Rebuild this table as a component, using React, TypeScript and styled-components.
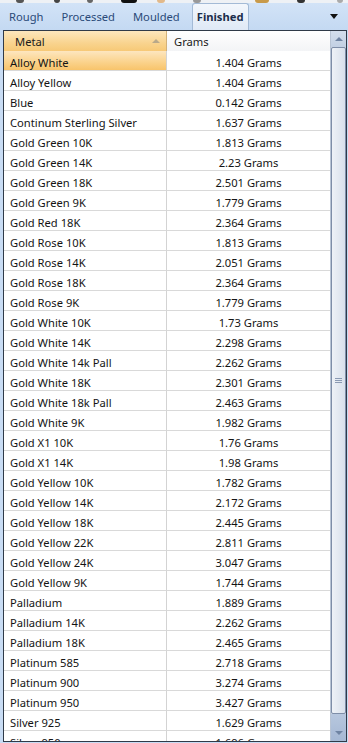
import React from "react";
import styled, { createGlobalStyle } from "styled-components";

const GlobalStyle = createGlobalStyle`
  html, body { margin: 0; padding: 0; background: #c8dcf4; overflow: hidden; }
  body { font-family: "Segoe UI", "Noto Sans", "Open Sans", sans-serif; }
`;

const rows: [string, string][] = [
  ["Alloy White", "1.404"],
  ["Alloy Yellow", "1.404"],
  ["Blue", "0.142"],
  ["Continum Sterling Silver", "1.637"],
  ["Gold Green 10K", "1.813"],
  ["Gold Green 14K", "2.23"],
  ["Gold Green 18K", "2.501"],
  ["Gold Green 9K", "1.779"],
  ["Gold Red 18K", "2.364"],
  ["Gold Rose 10K", "1.813"],
  ["Gold Rose 14K", "2.051"],
  ["Gold Rose 18K", "2.364"],
  ["Gold Rose 9K", "1.779"],
  ["Gold White 10K", "1.73"],
  ["Gold White 14K", "2.298"],
  ["Gold White 14k Pall", "2.262"],
  ["Gold White 18K", "2.301"],
  ["Gold White 18k Pall", "2.463"],
  ["Gold White 9K", "1.982"],
  ["Gold X1 10K", "1.76"],
  ["Gold X1 14K", "1.98"],
  ["Gold Yellow 10K", "1.782"],
  ["Gold Yellow 14K", "2.172"],
  ["Gold Yellow 18K", "2.445"],
  ["Gold Yellow 22K", "2.811"],
  ["Gold Yellow 24K", "3.047"],
  ["Gold Yellow 9K", "1.744"],
  ["Palladium", "1.889"],
  ["Palladium 14K", "2.262"],
  ["Palladium 18K", "2.465"],
  ["Platinum 585", "2.718"],
  ["Platinum 900", "3.274"],
  ["Platinum 950", "3.427"],
  ["Silver 925", "1.629"],
  ["Silver 950", "1.696"],
];

const Frame = styled.div`
  width: 348px;
  height: 743px;
  display: flex;
  flex-direction: column;
  background: #c8dcf4;
  overflow: hidden;
`;

const TopStrip = styled.div`
  height: 3px;
  flex: none;
  display: flex;
  align-items: flex-start;
  background: #eef1f5;
`;

const Blob = styled.span<{ $ml: number; $w: number; $c: string }>`
  display: block;
  margin-left: ${(p) => p.$ml}px;
  width: ${(p) => p.$w}px;
  height: 3px;
  border-radius: 0 0 3px 3px;
  background: ${(p) => p.$c};
`;

const TabBar = styled.div`
  height: 27px;
  flex: none;
  display: flex;
  align-items: stretch;
  background: linear-gradient(#d2e3f7, #c4d9f2);
`;

const Tab = styled.div<{ $active?: boolean }>`
  display: flex;
  align-items: center;
  padding-bottom: 1px;
  font-size: 11.2px;
  color: ${(p) => (p.$active ? "#1b2d4a" : "#2a4a78")};
  font-weight: ${(p) => (p.$active ? 700 : 400)};
  padding-left: ${(p) => (p.$active ? "4px" : "8px")};
  padding-right: ${(p) => (p.$active ? "4px" : "8px")};
  margin-left: ${(p) => (p.$active ? "3px" : "0")};
  background: ${(p) => (p.$active ? "linear-gradient(#f3f7fc, #dfe9f6)" : "transparent")};
  border: ${(p) => (p.$active ? "1px solid #a3bad6" : "1px solid transparent")};
  border-bottom: none;
  border-radius: 3px 3px 0 0;
`;

const Spacer = styled.div`
  flex: 1;
`;

const DropArrow = styled.div`
  align-self: center;
  width: 0;
  height: 0;
  margin-right: 10px;
  border-left: 4px solid transparent;
  border-right: 4px solid transparent;
  border-top: 5px solid #111;
`;

const GridBox = styled.div`
  flex: 1;
  min-height: 0;
  display: flex;
  margin: 0 1px 1px 3px;
  border: 1px solid #2f3a48;
  background: #fff;
  overflow: hidden;
`;

const Table = styled.div`
  flex: 1;
  display: grid;
  grid-template-columns: 163px 1fr;
  grid-auto-rows: 20px;
  align-content: start;
  overflow: hidden;
`;

const HeadCell = styled.div<{ $sorted?: boolean }>`
  height: 21px;
  display: flex;
  align-items: center;
  padding-left: ${(p) => (p.$sorted ? "11px" : "7px")};
  padding-right: 6px;
  font-size: 11.2px;
  color: #1a1a1a;
  box-sizing: border-box;
  border-bottom: 1px solid #d5d9de;
  border-right: ${(p) => (p.$sorted ? "1px solid #d3b27a" : "none")};
  background: ${(p) =>
    p.$sorted
      ? "linear-gradient(#fde7bd, #f9d48f 60%, #f7c977)"
      : "linear-gradient(#ffffff, #f3f4f6)"};
`;

const HeadLabel = styled.span`
  flex: 1;
`;

const SortArrow = styled.span`
  width: 0;
  height: 0;
  border-left: 4px solid transparent;
  border-right: 4px solid transparent;
  border-bottom: 4px solid #b9a98a;
`;

const Cell = styled.div<{ $num?: boolean; $selected?: boolean }>`
  height: 20px;
  box-sizing: border-box;
  display: flex;
  align-items: center;
  padding-top: 3px;
  justify-content: ${(p) => (p.$num ? "center" : "flex-start")};
  padding-left: ${(p) => (p.$num ? "0" : "6px")};
  font-size: 11.2px;
  color: #141414;
  white-space: nowrap;
  border-bottom: 1px solid #d9d9d9;
  border-right: ${(p) => (p.$num ? "none" : "1px solid #d3d3d3")};
  background: ${(p) =>
    p.$selected ? "linear-gradient(#fde6bf, #fbd48f 55%, #f8c46b)" : "#fff"};
`;

const ScrollBar = styled.div`
  width: 15px;
  flex: none;
  display: flex;
  flex-direction: column;
  background: #c9d3e1;
  border-left: 1px solid #b8c4d4;
`;

const ScrollBtn = styled.div<{ $down?: boolean }>`
  height: ${(p) => (p.$down ? "27px" : "16px")};
  flex: none;
  display: flex;
  align-items: ${(p) => (p.$down ? "flex-end" : "center")};
  padding-bottom: ${(p) => (p.$down ? "6px" : "0")};
  box-sizing: border-box;
  justify-content: center;
  background: ${(p) =>
    p.$down ? "linear-gradient(#b7c7de, #a5b8d4)" : "linear-gradient(#d3deec, #c2d0e3)"};
`;

const Arrow = styled.span<{ $down?: boolean }>`
  width: 0;
  height: 0;
  border-left: 4px solid transparent;
  border-right: 4px solid transparent;
  ${(p) =>
    p.$down ? "border-top: 4px solid #6f84a3;" : "border-bottom: 4px solid #6f84a3;"}
`;

const Thumb = styled.div`
  flex: 1;
  border: 1px solid #7e8ea8;
  border-radius: 2px;
  background: linear-gradient(90deg, #eef2f7, #d8e0eb);
  display: flex;
  align-items: center;
  justify-content: center;
`;

const Grip = styled.div`
  width: 7px;
  height: 6px;
  background: repeating-linear-gradient(#8a9ab3 0 1px, transparent 1px 2px);
`;

export default function App() {
  return (
    <>
      <GlobalStyle />
      <Frame>
        <TopStrip>
          <Blob $ml={16} $w={8} $c="#555" />
          <Blob $ml={30} $w={6} $c="#444" />
          <Blob $ml={27} $w={6} $c="#666" />
          <Blob $ml={28} $w={16} $c="#111" />
          <Blob $ml={20} $w={8} $c="#e2b98a" />
          <Blob $ml={28} $w={8} $c="#999" />
          <Blob $ml={54} $w={14} $c="#c89a4a" />
          <Blob $ml={28} $w={8} $c="#333" />
          <Blob $ml={32} $w={6} $c="#aaa" />
        </TopStrip>
        <TabBar>
          <Tab>Rough</Tab>
          <Tab>Processed</Tab>
          <Tab>Moulded</Tab>
          <Tab $active>Finished</Tab>
          <Spacer />
          <DropArrow />
        </TabBar>
        <GridBox>
          <Table>
            <HeadCell $sorted>
              <HeadLabel>Metal</HeadLabel>
              <SortArrow />
            </HeadCell>
            <HeadCell>
              <HeadLabel>Grams</HeadLabel>
            </HeadCell>
            {rows.map(([name, g], i) => (
              <React.Fragment key={name}>
                <Cell $selected={i === 0}>{name}</Cell>
                <Cell $num>{g} Grams</Cell>
              </React.Fragment>
            ))}
          </Table>
          <ScrollBar>
            <ScrollBtn>
              <Arrow />
            </ScrollBtn>
            <Thumb>
              <Grip />
            </Thumb>
            <ScrollBtn $down>
              <Arrow $down />
            </ScrollBtn>
          </ScrollBar>
        </GridBox>
      </Frame>
    </>
  );
}
